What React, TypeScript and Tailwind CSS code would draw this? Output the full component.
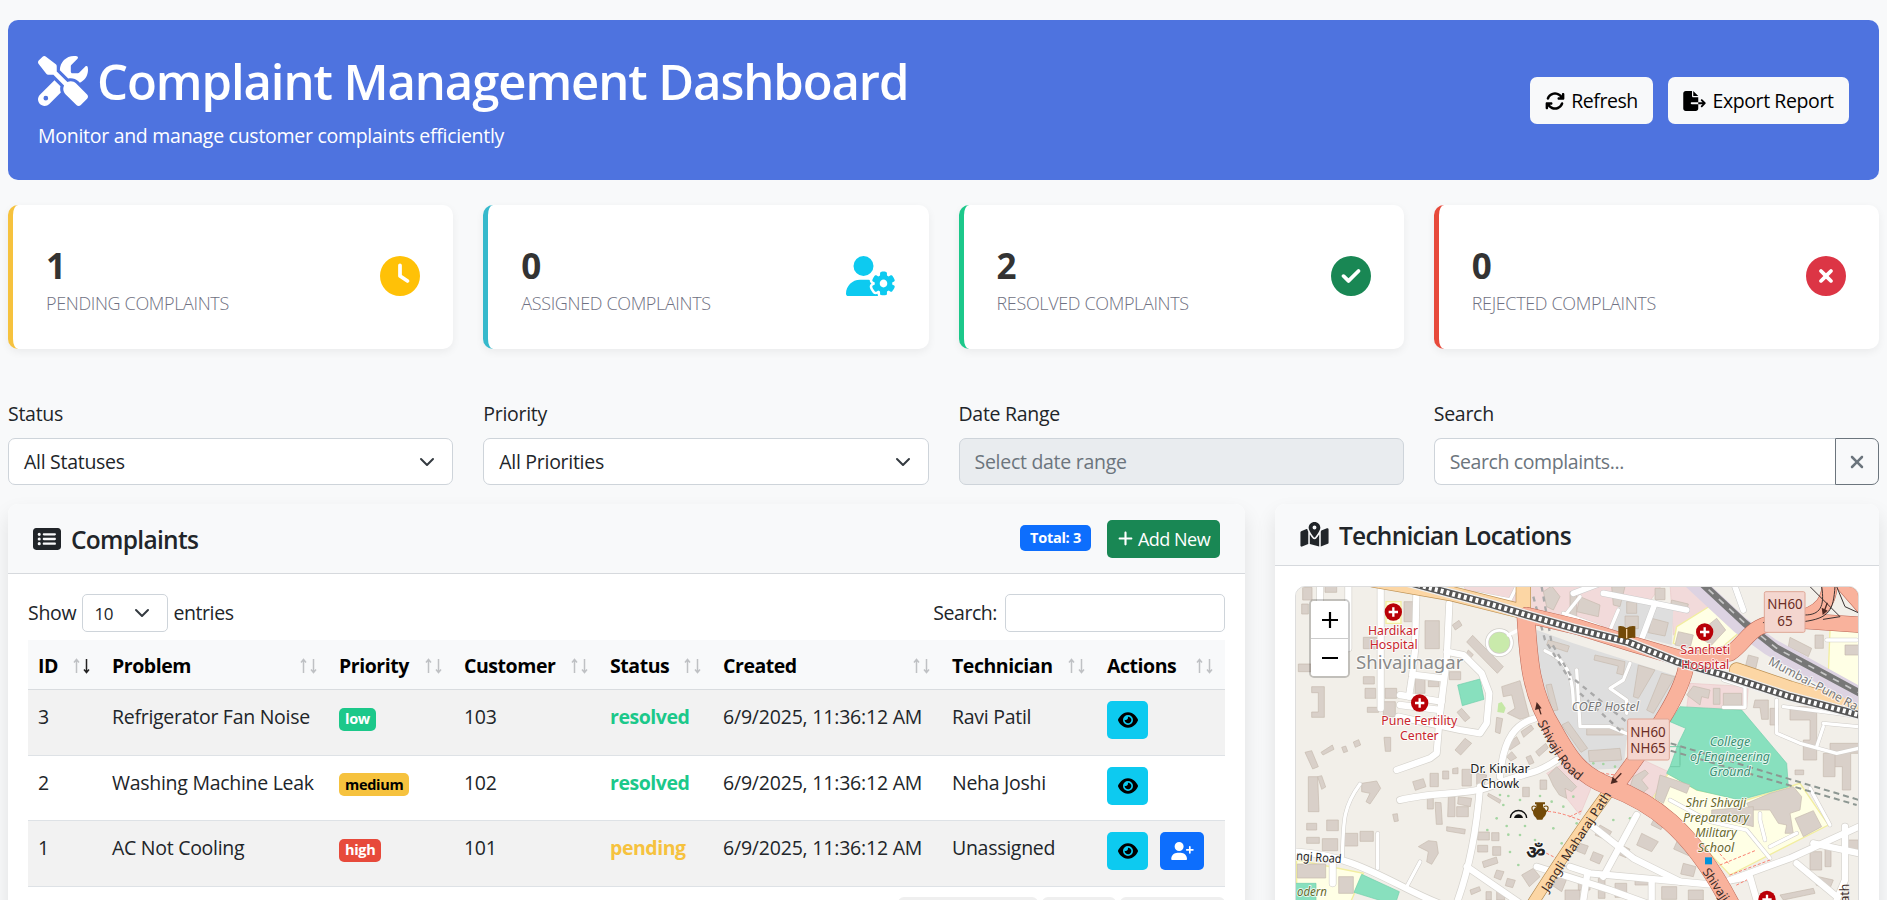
import React from "react";
import {
  FaScrewdriverWrench,
  FaArrowsRotate,
  FaFileExport,
  FaClock,
  FaUserGear,
  FaCircleCheck,
  FaCircleXmark,
  FaRectangleList,
  FaPlus,
  FaXmark,
  FaMapLocationDot,
  FaEye,
  FaUserPlus,
} from "react-icons/fa6";

function Chevron({ className = "" }: { className?: string }) {
  return (
    <svg viewBox="0 0 16 16" className={className} fill="none" stroke="#343a40" strokeWidth="2" strokeLinecap="round" strokeLinejoin="round">
      <path d="m2 5 6 6 6-6" />
    </svg>
  );
}

function Header() {
  return (
    <header className="flex h-40 items-start justify-between rounded-[10px] bg-[#4e73df] p-[30px] text-white">
      <div>
        <h1 className="flex h-[62px] items-center text-[49px] font-semibold leading-[60px]">
          <FaScrewdriverWrench className="mr-[9px] size-[50px] shrink-0" />
          <span className="whitespace-nowrap tracking-[-1.08px]">Complaint Management Dashboard</span>
        </h1>
        <p className="mt-[9px] leading-[30px] whitespace-nowrap">Monitor and manage customer complaints efficiently</p>
      </div>
      <div className="mt-[27px] flex gap-[15px] text-black">
        <button className="flex h-[47px] w-[123px] items-center justify-center gap-[6px] whitespace-nowrap rounded-[7px] bg-[#f8f9fa] tracking-[-0.45px]">
          <FaArrowsRotate className="size-5 shrink-0" />
          <span className="pt-px">Refresh</span>
        </button>
        <button className="flex h-[47px] w-[181px] items-center justify-center gap-[6px] whitespace-nowrap rounded-[7px] bg-[#f8f9fa] tracking-[-0.4px]">
          <FaFileExport className="h-5 w-[23px] shrink-0" />
          <span className="pt-px">Export Report</span>
        </button>
      </div>
    </header>
  );
}

const stats = [
  { value: "1", label: "PENDING COMPLAINTS", border: "border-[#f6c23e]", icon: <FaClock className="mb-[2px] size-10 text-[#ffc107]" /> },
  { value: "0", label: "ASSIGNED COMPLAINTS", border: "border-[#36b9cc]", icon: <FaUserGear className="mb-[2px] h-10 w-[50px] text-[#0dcaf0]" /> },
  { value: "2", label: "RESOLVED COMPLAINTS", border: "border-[#1cc88a]", icon: <FaCircleCheck className="mb-[2px] size-10 text-[#198754]" /> },
  { value: "0", label: "REJECTED COMPLAINTS", border: "border-[#e74a3b]", icon: <FaCircleXmark className="mb-[2px] size-10 text-[#dc3545]" /> },
];

function Stats() {
  return (
    <section className="mt-[25px] grid grid-cols-4 gap-[30px]">
      {stats.map((s) => (
        <div key={s.label} className={`flex h-36 items-center justify-between rounded-[10px] border-l-[5px] bg-white pl-[33px] pr-[33px] shadow-[0_3px_8px_rgba(0,0,0,0.06)] ${s.border}`}>
          <div className="pt-2">
            <div className="text-[35px] font-bold leading-[42px] text-[#333]">{s.value}</div>
            <div className="mt-[3px] whitespace-nowrap text-[18px] font-light leading-[27px] tracking-[-0.35px] text-[#6f7182]">{s.label}</div>
          </div>
          {s.icon}
        </div>
      ))}
    </section>
  );
}

function Filters() {
  return (
    <section className="mt-[49px] grid grid-cols-4 gap-[30px] text-[#212529]">
      <div>
        <label className="mb-2 block leading-[32px]">Status</label>
        <div className="flex h-[47px] items-center justify-between rounded-[7px] border border-[#ced4da] bg-white pl-[15px] pr-[17px]">
          <span className="pt-px">All Statuses</span>
          <Chevron className="size-4" />
        </div>
      </div>
      <div>
        <label className="mb-2 block leading-[32px]">Priority</label>
        <div className="flex h-[47px] items-center justify-between rounded-[7px] border border-[#ced4da] bg-white pl-[15px] pr-[17px]">
          <span className="pt-px">All Priorities</span>
          <Chevron className="size-4" />
        </div>
      </div>
      <div>
        <label className="mb-2 block leading-[32px]">Date Range</label>
        <div className="flex h-[47px] items-center rounded-[7px] border border-[#ced4da] bg-[#e9ecef] px-[15px] pt-px text-[#6c757d]">Select date range</div>
      </div>
      <div>
        <label className="mb-2 block leading-[32px]">Search</label>
        <div className="flex h-[47px]">
          <div className="flex flex-1 items-center rounded-l-[7px] border border-r-0 border-[#ced4da] bg-white px-[15px] pt-px tracking-[-0.4px] text-[#6c757d]">Search complaints...</div>
          <button className="flex w-[44px] items-center justify-center rounded-r-[7px] border border-[#6c757d] text-[#6c757d]">
            <FaXmark className="size-5" />
          </button>
        </div>
      </div>
    </section>
  );
}

const columns = [
  { name: "ID", width: "w-[74px]", sorted: true },
  { name: "Problem", width: "w-[227px]" },
  { name: "Priority", width: "w-[125px]" },
  { name: "Customer", width: "w-[146px]" },
  { name: "Status", width: "w-[113px]" },
  { name: "Created", width: "w-[229px]" },
  { name: "Technician", width: "w-[155px]" },
  { name: "Actions", width: "w-[128px]" },
];

const rows = [
  { id: 3, problem: "Refrigerator Fan Noise", priority: "low", pill: "bg-[#1cc88a] text-white", customer: 103, status: "resolved", tone: "text-[#1cc88a]", tech: "Ravi Patil", bg: "bg-[#f2f2f2]" },
  { id: 2, problem: "Washing Machine Leak", priority: "medium", pill: "bg-[#f6c23e] text-black", customer: 102, status: "resolved", tone: "text-[#1cc88a]", tech: "Neha Joshi", bg: "bg-white" },
  { id: 1, problem: "AC Not Cooling", priority: "high", pill: "bg-[#e74a3b] text-white", customer: 101, status: "pending", tone: "text-[#f6c23e]", tech: "Unassigned", bg: "bg-[#f2f2f2]" },
];

function SortArrows({ down }: { down?: boolean }) {
  return (
    <svg viewBox="0 0 17 16" className="h-4 w-[17px] shrink-0" fill="none" strokeWidth="1.5">
      <path d="M3.5 15V2M1 4.5l2.5-3L6 4.5" stroke="#bfc1c4" />
      <path d="M13.5 1v13M11 11.5l2.5 3 2.5-3" stroke={down ? "#222" : "#bfc1c4"} />
    </svg>
  );
}

function ComplaintsCard() {
  return (
    <div className="h-[440px] w-[1237px] shrink-0 rounded-t-[10px] bg-white shadow-[0_10px_20px_rgba(0,0,0,0.1)]">
      <div className="flex h-[70px] items-center justify-between rounded-t-[10px] border-b border-[#d6d9dd] bg-[#f8f9fa] pl-[25px] pr-[25px]">
        <div className="flex items-center gap-[10px] text-[#212529]">
          <FaRectangleList className="size-[28px]" />
          <h2 className="pt-[4px] text-[24.5px] font-[550] tracking-[-0.7px]">Complaints</h2>
        </div>
        <div className="flex items-center gap-4">
          <span className="mb-[2px] flex h-[26px] w-[71px] items-center justify-center whitespace-nowrap rounded-[5px] bg-[#0d6efd] pt-px text-[14.5px] font-bold text-white">Total: 3</span>
          <button className="flex h-[38px] w-[113px] items-center justify-center gap-1 whitespace-nowrap rounded-[5px] bg-[#198754] text-[18px] tracking-[-0.5px] text-white">
            <FaPlus className="size-[17px]" />
            <span className="pt-px">Add New</span>
          </button>
        </div>
      </div>
      <div className="px-5 pt-[20px] text-[#212529]">
        <div className="flex h-[38px] items-center justify-between">
          <div className="flex items-center gap-[6px]">
            <span>Show</span>
            <div className="flex h-[38px] w-[86px] items-center justify-between rounded-[5px] border border-[#ced4da] pl-[11px] pr-[17px] text-[17px]">
              <span className="pt-px">10</span>
              <Chevron className="size-4" />
            </div>
            <span className="-ml-px tracking-[-0.4px]">entries</span>
          </div>
          <div className="flex items-center gap-2">
            <span className="tracking-[-0.45px]">Search:</span>
            <div className="h-[38px] w-[220px] rounded-[5px] border border-[#ced4da]" />
          </div>
        </div>
        <div className="mt-2">
          <div className="flex h-[50px] border-b border-[#d9dcdf] bg-[#f8f9fa] font-bold text-black">
            {columns.map((c) => (
              <div key={c.name} className={`flex shrink-0 items-center justify-between pl-[10px] pr-[12px] pt-[3px] tracking-[-0.45px] ${c.width}`}>
                <span>{c.name}</span>
                <SortArrows down={c.sorted} />
              </div>
            ))}
          </div>
          {rows.map((r) => (
            <div key={r.id} className={`flex h-[65.6px] whitespace-nowrap border-b border-[#dee2e6] pt-3 leading-[30px] ${r.bg}`}>
              <div className="w-[74px] pl-[10px]">{r.id}</div>
              <div className="w-[227px] pl-[10px]">{r.problem}</div>
              <div className="w-[125px] pl-[10px]">
                <span className={`mt-[3px] inline-flex h-[23px] items-center rounded-[5px] px-[6px] text-[14.5px] font-bold leading-none tracking-[-0.3px] ${r.pill}`}>{r.priority}</span>
              </div>
              <div className="w-[146px] pl-[10px]">{r.customer}</div>
              <div className={`w-[113px] pl-[10px] font-bold tracking-[-0.45px] ${r.tone}`}>{r.status}</div>
              <div className="w-[229px] pl-[10px] tracking-[-0.2px]">6/9/2025, 11:36:12 AM</div>
              <div className="w-[155px] pl-[10px]">{r.tech}</div>
              <div className="-mt-px flex gap-3 pl-[10px]">
                <button className="flex h-[38px] w-[41px] items-center justify-center rounded-[5px] bg-[#0dcaf0] text-black">
                  <FaEye className="size-5" />
                </button>
                {r.status === "pending" && (
                  <button className="flex h-[38px] w-[44px] items-center justify-center rounded-[5px] bg-[#0d6efd] text-white">
                    <FaUserPlus className="h-[18px] w-[23px]" />
                  </button>
                )}
              </div>
            </div>
          ))}
          <div className="mt-[10px] flex justify-end gap-1">
            <div className="h-10 w-[140px] rounded-[6px] bg-[#efefef]" />
            <div className="h-10 w-[74px] rounded-[6px] bg-[#efefef]" />
            <div className="h-10 w-[105px] rounded-[6px] bg-[#efefef]" />
          </div>
        </div>
      </div>
    </div>
  );
}

const minorRoads = [
  "M272 10V385", "M380 10 375 210 366 290 357 350", "M478 70 470 240 450 400 440 520 420 535 320 570",
  "M90 10V90", "M175 10V205", "M470 215 520 225 575 280 598 340 590 430 570 460 510 450 325 410",
  "M330 345 455 365", "M330 375 450 390", "M375 285 460 295",
  "M735 415C680 430 640 470 630 590", "M800 540C730 590 700 575 600 620C540 645 430 635 330 660",
  "M570 620C560 750 540 860 500 970", "M10 815C200 820 330 930 460 975", "M530 860 690 970",
  "M128 850V910", "M740 860 960 930 1070 970",
  "M890 725 1030 835 1170 905", "M1040 705 940 890", "M840 860 900 880 1280 915 1500 835 1707 740", "M892 880 880 960", "M1085 900V970",
  "M1300 905 1380 890 1400 960", "M1570 790 1707 820", "M1665 740V900L1640 960", "M1520 850 1640 950",
];

const greyRoads = [
  "M210 612C160 680 160 720 157 830", "M263 760V865", "M390 845 350 920",
  "M1560 625 1620 735", "M1140 660 1260 725 1370 750 1440 835", "M1425 780 1410 720 1410 700", "M1440 800 1520 760",
  "M1460 360V460L1530 490 1640 520 1707 505", "M1480 380 1640 400 1707 410", "M1600 440 1580 500", "M1600 430 1707 440", "M1300 300 1365 320V382H1300",
  "M765 212C830 240 850 280 850 380", "M1020 250 1000 300 960 325 1010 360V400", "M860 270 870 440H960L1020 465", "M985 90 960 150", "M680 20 660 60 560 40", "M870 50 830 100", "M1610 180H1700", "M930 140 820 100",
];

const cityRoads = ["M1095 70 1050 190", "M940 40 1070 65 1190 90", "M850 40 930 10", "M1335 20 1360 90"];

const buildings = [
  "M38 22h28v38H38Z", "M105 15h35v22h-35Z", "M35 72h20v30H35Z", "M342 65h32v60h-32Z", "M405 122h43v84h-43Z", "M487 135l20-14 9 15-20 14Z",
  "M220 172h40v34h-40Z", "M25 252h38v23H25Z", "M65 320h38v92H65v-16h20v-58H65Z", "M220 290h33v22h-33Z", "M225 325h32v30h-32Z", "M285 325h35v30h-35Z", "M375 290h30v50h-30Z", "M415 302h32v18h-32Z", "M478 275h34v24h-34Z",
  "M548 166 640 260 622 280 530 186Z", "M535 210l15 14-10 12-12-12Z", "M232 382h34v15h-34Z", "M280 365h36v45h-36Z", "M515 385l25 28-15 12-24-28Z",
  "M635 320 690 302 718 410 690 418 652 400 675 385 665 345 640 350Z", "M620 412l18 4-8 45-14-5Z",
  "M282 472h20v42h-16Z", "M45 517 65 512 85 560 68 567Z", "M93 517 127 495 132 508 99 525Z", "M155 502l12-4 6 16-12 4Z", "M190 486l16-7 6 16-16 7Z", "M495 510 525 475 545 490 512 525Z",
  "M55 590h28l4 105H55Z", "M83 590l12-3 12 34-12 7Z", "M215 610 260 603 272 625 240 672 228 665 240 640 215 635Z",
  "M368 605 400 596 408 620 376 631Z", "M420 580h25v40h-25Z", "M458 573h18v24h-18Z", "M488 566l16-3v18h-16Z", "M516 568h28v50h-28Z", "M560 580l30 5-8 32-22-4Z",
  "M650 495 680 470 690 490 660 510Z", "M693 455l30-20 8 12-30 25Z", "M650 530l15-15 15 18-18 10Z", "M708 532l14-6 10 22-14 6Z", "M737 515l30-25 8 14-28 25Z", "M595 640l38 20-4 10-36-22Z", "M698 622h20v28h-20Z", "M750 600h20v28h-20Z",
  "M412 655h18v32h-18Z", "M435 667l18 1 4 65h-18Z", "M475 650h20v60h-22Z", "M505 650l40 5-4 25-38-8Z", "M500 680h35v30h-35Z", "M470 740l56 8-2 14-54-9Z", "M308 703l14-2 3 22-12 2Z",
  "M50 730h30v20H50Z", "M110 720h35v32h-35Z", "M50 772h38v18H50Z", "M97 776h46v36H97Z", "M163 760h40v38h-40Z", "M210 754h40v30h-40Z",
  "M385 800 415 782 440 785 445 820 425 853 410 845 415 815Z", "M563 756h35v24h-35Z", "M605 758h22v24h-22Z", "M563 796h30v20h-30Z", "M608 800h24v26h-24Z", "M577 845l42-14 5 18-42 14Z",
  "M620 870l22 5-10 25-20-8Z", "M652 895l24 6-8 22-22-6Z", "M540 930l28-10 4 12-28 12Z", "M588 935h16v25h-16Z", "M620 932h24v28h-24Z", "M22 852h85v42H22Z", "M146 890h44v50h-44Z", "M695 885l35-20 20 25-32 30Z", "M795 865l40 20-20 50-30-20Z", "M825 930h45v35h-45Z",
  "M775 585 800 560 860 620 845 635 825 625 830 655 808 645 790 618Z", "M768 315l16-3 20 78-18 3Z", "M775 180 838 198 832 216 770 195Z", "M815 435l20-10 58 80-20 12Z",
  "M840 35h20v80h-20Z", "M870 50 930 75 925 110 860 95Z", "M1005 108h40v38h-40Z", "M1010 65h30v35h-30Z", "M1085 115l50 13-10 40-50-10Z", "M1095 25h30v34h-30Z", "M1145 60l50 12-4 18-50-10Z", "M965 20h40l-15 60-20-5Z", "M760 35 785 18 810 50 790 90 770 80Z",
  "M1255 135 1280 115 1307 150 1265 195 1240 180Z", "M1165 155l45 10-10 40-45-10Z", "M1500 172 1565 205 1555 230 1495 200Z", "M1575 165h25v40h-25Z", "M1665 195h42v30h-42Z", "M1375 225l30 8-10 42-30-12Z",
  "M915 225 1005 245 1000 285 980 280 985 258 912 240Z", "M1045 255 1095 270 1045 355 1030 350Z", "M1115 280 1155 290 1090 400 1070 390Z", "M1190 345 1210 318 1260 330 1255 355 1235 350 1230 375Z", "M1270 325h20v48h-20Z", "M1300 340h55v36h-55Z", "M890 445h110v20H890Z", "M895 512 990 505 995 540 898 545Z",
  "M1395 360h40v58h-20l-5-35h-20Z", "M1440 385h25v50h-25Z", "M1500 380h80v160h-40v-60h20v-60h-60Z", "M1620 490h87v30h-25v110h-25v-70h-37Z", "M1600 520h35v70h-35Z", "M1515 570h26v14h-26Z",
  "M1370 670 1440 640 1510 620 1535 650 1530 690 1500 700 1510 760 1485 760 1490 735 1465 730 1440 690 1380 690Z", "M1515 715 1570 692 1595 740 1540 770Z", "M1265 690 1390 680 1390 740 1350 730 1265 710Z",
  "M1110 585 1200 615 1190 640 1140 620 1120 670 1095 655Z", "M1030 590 1065 570 1075 580 1055 600 1075 625 1050 645 1020 620Z",
  "M1095 712l30 15-12 22-30-15Z", "M1055 760l50 25-20 30-45-20Z", "M985 790l35 18-12 25-35-15Z", "M930 735l35 20-15 25-35-15Z", "M1165 775l45 30-14 22-45-20Z", "M1180 850l38 10-8 30-38-8Z", "M870 790l25 8-10 25-25-10Z", "M910 815l30 12-12 25-28-12Z", "M865 900h35v30h-35Z", "M925 895h20v60h-20Z", "M975 910h35v42h-35Z", "M1035 900h40v15h-40Z", "M1115 920h45v38h-45Z", "M1195 930h45v30h-45Z",
  "M1560 815h35v55h-35Z", "M1605 800h18v60h-18Z", "M1675 780h30v35h-30Z", "M1470 945 1570 925 1575 940 1480 960Z", "M1585 890l45 10-12 30-40-15Z",
];

function Cross({ x, y }: { x: number; y: number }) {
  return (
    <g>
      <circle cx={x} cy={y} r="26" fill="#b90007" />
      <path d={`M${x - 14} ${y}h28M${x} ${y - 14}v28`} stroke="#fff" strokeWidth="7" />
    </g>
  );
}

const label = "font-['Noto_Sans','Open_Sans',sans-serif] tracking-normal";

function StreetMap() {
  return (
    <svg viewBox="18 21 1686 939" className="h-[313px] w-[562px]">
      <rect x="0" y="0" width="1720" height="980" fill="#f2efe9" />
      <path d="M520 10H1120L1000 165 690 85 530 45ZM1140 10H1210L1265 80 1150 165ZM1200 310 1375 320 1370 385H1190ZM1060 540 1135 575 1075 670 1000 625ZM770 580 830 545 905 620 870 705Z" fill="#f2dada" stroke="#eac9c9" strokeWidth="2" />
      <path d="M740 150 850 190 1165 290 1110 420 1010 480 1000 565 900 570 740 330ZM990 50 1150 80 1145 195 970 150Z" fill="#dedede" />
      <g fill="#ffffe5" stroke="#f2ee9f" strokeWidth="4">
        <path d="M1260 78 1345 160 1280 215 1150 190 1160 140ZM1135 580 1220 630 1370 660 1530 610 1615 735 1320 885 1240 800 1160 720 1080 670ZM1620 150H1720V330L1615 280ZM1630 15H1710V60ZM20 840 220 880 180 970H20ZM288 65h45v65h-45Z" />
      </g>
      <path d="M1170 380 1355 390 1490 550 1495 620 1350 660 1220 630 1130 580 1140 560 1165 490 1187 445 1140 425ZM503 315 570 297 582 358 517 377ZM215 883 328 935 315 975 192 937ZM10 910H78V970H10Z" fill="#88e0be" stroke="#70cfaa" strokeWidth="2" />
      <path d="M1140 500h30v60h-30M1170 500v55" stroke="#74cda9" strokeWidth="3" fill="none" />
      <path d="M625 370l10-4 12 18-5 15-20-3Z" fill="#c5e8a5" />
      <g fill="#a5d5a2">
        {[[630, 645], [655, 648], [690, 660], [750, 648], [785, 665], [620, 715], [650, 738], [705, 738], [690, 765], [655, 764], [735, 780], [790, 745], [815, 790], [660, 816], [685, 855], [720, 825], [592, 750], [640, 675], [820, 680], [850, 650], [860, 730], [910, 550], [940, 552], [975, 560], [970, 720], [1020, 715]].map(([x, y]) => (
          <circle key={`${x}-${y}`} cx={x} cy={y} r="4" />
        ))}
      </g>
      <g fill="#d9d0c9" stroke="#c5b9ae" strokeWidth="2">
        {buildings.map((d) => (
          <path key={d} d={d} />
        ))}
      </g>
      <g fill="none" strokeLinecap="round" strokeLinejoin="round">
        <circle cx="628" cy="188" r="37" fill="#c9eaab" stroke="#d0cdc8" strokeWidth="12" />
        <path d="M655 165 685 150" stroke="#fff" strokeWidth="10" />
        <circle cx="628" cy="188" r="37" stroke="#fff" strokeWidth="8" />
        {minorRoads.map((d) => (
          <path key={d} d={d} stroke="#d6d3cd" strokeWidth="23" />
        ))}
        {cityRoads.map((d) => (
          <path key={d} d={d} stroke="#cbcbcb" strokeWidth="20" />
        ))}
        {greyRoads.map((d) => (
          <path key={d} d={d} stroke="#cfccc8" strokeWidth="13" />
        ))}
        {greyRoads.map((d) => (
          <path key={d} d={d} stroke="#fff" strokeWidth="10" />
        ))}
        {cityRoads.map((d) => (
          <path key={d} d={d} stroke="#fff" strokeWidth="17" />
        ))}
        {minorRoads.map((d) => (
          <path key={d} d={d} stroke="#fff" strokeWidth="19" />
        ))}
        <path d="M755 20 785 190 850 300M730 50 765 180 840 300M855 300 1015 430M870 340 1000 460" stroke="#a9a9a9" strokeWidth="7" strokeDasharray="15 15" strokeLinecap="butt" />
        <path d="M1142 490 1707 660M1142 512 1700 675" stroke="#8d9792" strokeWidth="6" strokeDasharray="18 12" strokeLinecap="butt" />
        <path d="M745 695C790 690 830 705 870 720M770 820 800 835M1290 855 1400 810M1320 885 1440 840M840 710 880 690M905 575 1010 590M1340 915 1370 900M1270 800 1320 855" stroke="#f98071" strokeWidth="3" strokeDasharray="7 8" />
        <path d="M960 630C900 710 830 810 725 975" stroke="#b28a50" strokeWidth="36" />
        <path d="M250 0 480 40 700 95M700 0V95M1340 270 1500 325 1720 390" stroke="#bd9255" strokeWidth="46" />
        <path d="M960 630C900 710 830 810 725 975" stroke="#fcd6a4" strokeWidth="32" />
        <path d="M250 0 480 40 700 95M700 0V95M1340 270 1500 325 1720 390" stroke="#fcd6a4" strokeWidth="42" />
        <path d="M1205 0 1350 135 1440 200 1720 355" stroke="#ddd3e2" strokeWidth="54" strokeLinecap="butt" />
        <path d="M1225 0 1365 130 1460 205 1720 345" stroke="#777" strokeWidth="22" strokeLinecap="butt" />
        <path d="M1225 0 1365 130 1460 205 1720 345" stroke="#c7c7c7" strokeWidth="5" strokeDasharray="20 22" strokeLinecap="butt" />
        <g stroke="#bb6655">
          <path d="M708 110C715 230 720 340 790 450C840 540 870 585 960 620C1080 665 1200 740 1320 970" strokeWidth="56" />
          <path d="M710 105 860 140 1020 190 1190 240 1320 220C1380 180 1370 130 1500 120L1720 135M1190 250C1180 330 1110 440 980 615M1620 0C1620 60 1600 100 1510 120M1650 0 1720 80" strokeWidth="48" />
        </g>
        <g stroke="#f9b29c">
          <path d="M708 110C715 230 720 340 790 450C840 540 870 585 960 620C1080 665 1200 740 1320 970" strokeWidth="53" />
          <path d="M710 105 860 140 1020 190 1190 240 1320 220C1380 180 1370 130 1500 120L1720 135M1190 250C1180 330 1110 440 980 615M1620 0C1620 60 1600 100 1510 120M1650 0 1720 80" strokeWidth="45" />
        </g>
        <path d="M1595 20C1605 80 1590 105 1545 105M1635 20C1630 90 1620 115 1540 125M1560 20 1650 110 1600 118M1640 20 1665 80 1720 105M1420 128l15-6" stroke="#393232" strokeWidth="3" />
        <path d="M330 0 600 72 710 105 850 145 1010 185 1160 245 1300 285 1500 350 1720 408" stroke="#eee" strokeWidth="30" />
        <path d="M330 0 600 72 710 105 850 145 1010 185 1160 245 1300 285 1500 350 1720 408" stroke="#555" strokeWidth="22" />
        <path d="M330 0 600 72 710 105 850 145 1010 185 1160 245 1300 285 1500 350 1720 408" stroke="#fff" strokeWidth="14" strokeDasharray="9 9" strokeLinecap="butt" />
      </g>
      <g stroke="#4b2922" fill="#4b2922" strokeWidth="4">
        <path d="M753 403 744 375M994 580 970 605M1612 68 1602 95" />
        <path d="m740 366-5 24 20-5ZM962 612l22-6-16-16ZM1598 105l-3-22 18 9Z" stroke="none" />
      </g>
      <Cross x={310} y={96} />
      <Cross x={389} y={369} />
      <Cross x={1244} y={156} />
      <Cross x={1431} y={958} />
      <path d="M985 139q14-3 24 6 12-9 27-6v35q-16-3-27 5-11-8-24-5Z" fill="#734a08" />
      <path d="M1010 147v28" stroke="#f9d5a8" strokeWidth="4" />
      <path d="M735 667h30v6h-6v8c14 8 12 24 1 32l-3 6h-16l-3-6c-11-8-13-24 1-32v-8h-4Z" fill="#734a08" />
      <path d="M739 680c-18-8-16 12-4 16M761 680c18-8 16 12 4 16" fill="none" stroke="#734a08" strokeWidth="3.5" />
      <path d="M672 714a14 15 0 0 1 27 0Z" fill="#111" />
      <path d="M661 714a24 22 0 0 1 49 0" fill="none" stroke="#111" strokeWidth="4" />
      <g className={label} textAnchor="middle" strokeLinejoin="round" paintOrder="stroke" stroke="#ffffff" strokeOpacity="0.75" strokeWidth="6">
        <g fill="#c9252d" fontSize="38">
          <text x="309" y="164" textLength="150" lengthAdjust="spacingAndGlyphs">Hardikar</text>
          <text x="311" y="208" textLength="144" lengthAdjust="spacingAndGlyphs">Hospital</text>
          <text x="388" y="435" textLength="228" lengthAdjust="spacingAndGlyphs">Pune Fertility</text>
          <text x="388" y="479" textLength="116" lengthAdjust="spacingAndGlyphs">Center</text>
          <text x="1246" y="223" textLength="150" lengthAdjust="spacingAndGlyphs">Sancheti</text>
          <text x="1246" y="268" textLength="144" lengthAdjust="spacingAndGlyphs">Hospital</text>
        </g>
        <text x="359" y="267" textLength="322" lengthAdjust="spacingAndGlyphs" fontSize="56" fill="#8a8a8a">Shivajinagar</text>
        <g fill="#222" fontSize="37">
          <text x="630" y="580" textLength="178" lengthAdjust="spacingAndGlyphs">Dr. Kinikar</text>
          <text x="630" y="623" textLength="116" lengthAdjust="spacingAndGlyphs">Chowk</text>
          <text x="738" y="836" fontSize="58" fontWeight="bold">ॐ</text>
          <text x="86" y="845" transform="rotate(4 86 845)" textLength="136" lengthAdjust="spacingAndGlyphs">ngi Road</text>
        </g>
        <g fill="#555" fontSize="37" fontStyle="italic">
          <text x="946" y="392" textLength="202" lengthAdjust="spacingAndGlyphs" fill="#777">COEP Hostel</text>
          <g fill="#3c9074">
            <text x="1320" y="499" textLength="122" lengthAdjust="spacingAndGlyphs">College</text>
            <text x="1320" y="543" textLength="240" lengthAdjust="spacingAndGlyphs">of Engineering</text>
            <text x="1320" y="588" textLength="124" lengthAdjust="spacingAndGlyphs">Ground</text>
          </g>
          <g fill="#6a6a2c">
            <text x="1278" y="682" textLength="182" lengthAdjust="spacingAndGlyphs">Shri Shivaji</text>
            <text x="1278" y="727" textLength="198" lengthAdjust="spacingAndGlyphs">Preparatory</text>
            <text x="1278" y="771" textLength="124" lengthAdjust="spacingAndGlyphs">Military</text>
            <text x="1278" y="815" textLength="110" lengthAdjust="spacingAndGlyphs">School</text>
            <text x="66" y="947" textLength="90" lengthAdjust="spacingAndGlyphs">odern</text>
          </g>
        </g>
        <text x="1564" y="322" transform="rotate(28 1564 322)" fontSize="37" fill="#777" textLength="298" lengthAdjust="spacingAndGlyphs">Mumbai–Pune Ra</text>
      </g>
      <path id="shivaji-north" d="M742 428C785 515 815 575 892 620" fill="none" />
      <g className={label} fill="#3b2b27" fontSize="37">
        <text fontSize="38"><textPath href="#shivaji-north">Shivaji Road</textPath></text>
        <text x="1236" y="875" transform="rotate(56 1236 875)">Shivaji Road</text>
        <text x="774" y="938" transform="rotate(-57 774 938)" textLength="350" lengthAdjust="spacingAndGlyphs">Jangli Maharaj Path</text>
        <text x="1678" y="990" transform="rotate(-90 1678 990)">Path</text>
      </g>
      <g className={label} textAnchor="middle" fill="#6b2d25" fontSize="43">
        <rect x="1423" y="35" width="122" height="122" rx="5" fill="#f4d6cf" stroke="#dea696" strokeWidth="3" />
        <text x="1485" y="88" textLength="106" lengthAdjust="spacingAndGlyphs">NH60</text>
        <text x="1485" y="137" textLength="46" lengthAdjust="spacingAndGlyphs">65</text>
        <rect x="1013" y="417" width="125" height="123" rx="5" fill="#f4d6cf" stroke="#dea696" strokeWidth="3" />
        <text x="1074" y="470" textLength="106" lengthAdjust="spacingAndGlyphs">NH60</text>
        <text x="1074" y="519" textLength="106" lengthAdjust="spacingAndGlyphs">NH65</text>
      </g>
      <rect x="1245" y="832" width="21" height="21" fill="#0092da" />
    </svg>
  );
}

function MapCard() {
  return (
    <div className="h-[440px] flex-1 rounded-t-[10px] bg-white shadow-[0_10px_20px_rgba(0,0,0,0.1)]">
      <div className="flex h-[62px] items-center gap-[10px] rounded-t-[10px] border-b border-[#d6d9dd] bg-[#f8f9fa] pl-[25px] text-[#212529]">
        <FaMapLocationDot className="h-[25px] w-[29px]" />
        <h2 className="whitespace-nowrap pt-[4px] text-[24.5px] font-[550] tracking-[-0.75px]">Technician Locations</h2>
      </div>
      <div className="px-5 pt-5">
        <div className="relative h-[375px] overflow-hidden rounded-[10px] border border-[#ddd] bg-[#f2efe9]">
          <StreetMap />
          <div className="absolute left-[13px] top-[12px] w-[41px] rounded-[5px] border-2 border-black/20 bg-clip-padding text-black">
            <div className="flex h-[38px] items-center justify-center rounded-t-[3px] border-b border-[#ccc] bg-white">
              <svg viewBox="0 0 16 16" className="size-4" stroke="currentColor" strokeWidth="2.2"><path d="M0 8h16M8 0v16" /></svg>
            </div>
            <div className="flex h-[37px] items-center justify-center rounded-b-[3px] bg-white">
              <svg viewBox="0 0 16 16" className="size-4" stroke="currentColor" strokeWidth="2.2"><path d="M0 8h16" /></svg>
            </div>
          </div>
        </div>
      </div>
    </div>
  );
}

export default function App() {
  return (
    <div className="h-[900px] overflow-hidden bg-[#f8f9fa] px-2 pt-5 font-['Open_Sans','Noto_Sans',sans-serif] text-[19.5px] tracking-[-0.28px]">
      <Header />
      <Stats />
      <Filters />
      <main className="mt-[19px] flex gap-[30px]">
        <ComplaintsCard />
        <MapCard />
      </main>
    </div>
  );
}
